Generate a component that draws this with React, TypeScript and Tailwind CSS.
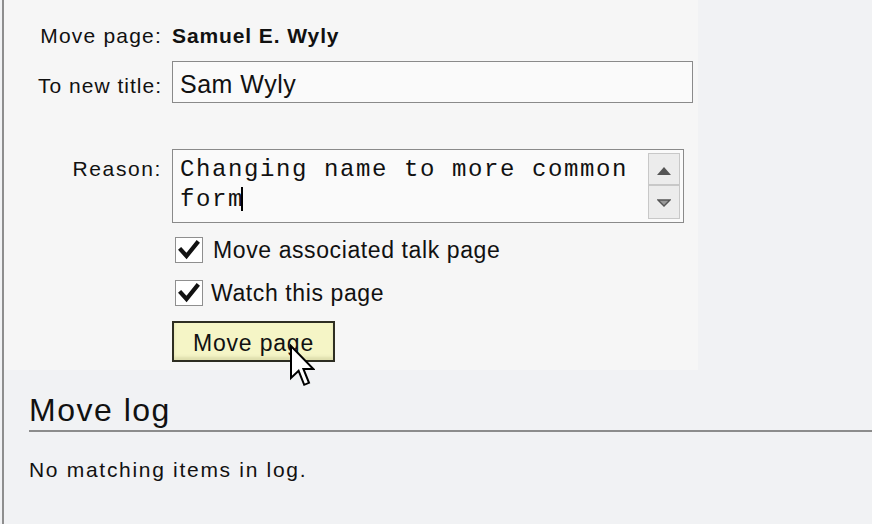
import React from "react";

function Check() {
  return (
    <svg width="22" height="20" viewBox="0 0 22 20" className="block">
      <path d="M3 10 L8.5 16 L19 3" fill="none" stroke="#111" strokeWidth="4.2" strokeLinecap="square" strokeLinejoin="miter" />
    </svg>
  );
}

function Box() {
  return (
    <div className="w-[28px] h-[26px] border border-[#8f8f8f] bg-white flex items-center justify-center shrink-0">
      <Check />
    </div>
  );
}

export default function App() {
  return (
    <div className="relative w-[872px] h-[524px] overflow-hidden bg-[#f1f2f4] text-[#111] font-['Liberation_Sans',Arial,sans-serif]">
      <div className="ml-[2px] h-full border-l-2 border-[#8e8e8e] flex flex-col">
        <section className="w-[694px] bg-[#f6f6f6] pt-[24px] pb-[8px]">
          <div className="flex items-baseline gap-[10px]">
            <span className="w-[158px] text-right text-[21px] leading-[24px] tracking-[1.2px]">Move page:</span>
            <span className="font-bold text-[21px] leading-[24px] tracking-[0.9px]">Samuel E. Wyly</span>
          </div>
          <div className="mt-[13px] flex items-baseline gap-[10px]">
            <span className="w-[158px] text-right text-[21px] leading-[24px] tracking-[1px]">To new title:</span>
            <div className="w-[521px] h-[42px] border border-[#8a8a8a] bg-[#fafafa] pl-[7px] pt-[4px] text-[25px] leading-[36px] tracking-[0.5px]">
              Sam Wyly
            </div>
          </div>
          <div className="mt-[46px] flex items-baseline gap-[10px]">
            <span className="w-[158px] text-right text-[21px] leading-[24px] tracking-[1.6px]">Reason:</span>
            <div className="w-[512px] h-[74px] border border-[#8a8a8a] bg-[#fafafa] flex py-[3px] pr-[3px]">
              <div className="flex-1 pl-[7px] pt-[2px] font-['Liberation_Mono','Courier_New',monospace] text-[24px] leading-[30px] tracking-[1.6px]">
                Changing name to more common form<span className="inline-block w-[2px] h-[24px] bg-black align-[-5px] ml-[-3px]"></span>
              </div>
              <div className="w-[32px] flex flex-col">
                <div className="h-[32px] border border-[#c8c8c8] bg-[#ececec] flex items-center justify-center pt-[3px]">
                  <svg width="14" height="8" viewBox="0 0 14 8"><path d="M7 0 L14 8 L0 8 Z" fill="#555" /></svg>
                </div>
                <div className="h-[34px] border border-[#c8c8c8] bg-[#ececec] flex items-center justify-center pt-[2px]">
                  <svg width="14" height="8" viewBox="0 0 14 8"><path d="M1 1 L13 1 L7 7 Z" fill="#999" stroke="#555" strokeWidth="1.4" /></svg>
                </div>
              </div>
            </div>
          </div>
          <div className="ml-[171px] mt-[14px] flex items-center gap-[10px]">
            <Box />
            <span className="text-[23px] leading-[26px] tracking-[0.6px]">Move associated talk page</span>
          </div>
          <div className="ml-[171px] mt-[17px] flex items-center gap-[8px]">
            <Box />
            <span className="text-[23px] leading-[26px] tracking-[0.6px]">Watch this page</span>
          </div>
          <button className="ml-[168px] mt-[15px] block w-[163px] h-[41px] border-2 border-[#2e2e22] bg-[#f5f5c6] text-left pl-[19px] pt-[3px] text-[23px] leading-[32px] tracking-[0.8px] shadow-[inset_0_-3px_3px_rgba(200,200,150,0.5)]">
            Move page
          </button>
        </section>
        <h2 className="ml-[25px] mt-[22px] pb-[2px] border-b-2 border-[#8c8c8c] text-[32px] leading-[36px] tracking-[1.5px] font-normal">
          Move log
        </h2>
        <p className="ml-[25px] mt-[26px] text-[21px] leading-[24px] tracking-[1.7px]">No matching items in log.</p>
      </div>
      <svg className="absolute left-[290px] top-[344px]" width="25" height="44" viewBox="-0.5 -0.5 12.5 21">
        <path d="M0 0 L0 16 L3.8 12.4 L6.6 19.4 L9 18.4 L6.2 11.5 L11.2 11.5 Z" fill="#fff" stroke="#000" strokeWidth="1" strokeLinejoin="miter" />
      </svg>
    </div>
  );
}
